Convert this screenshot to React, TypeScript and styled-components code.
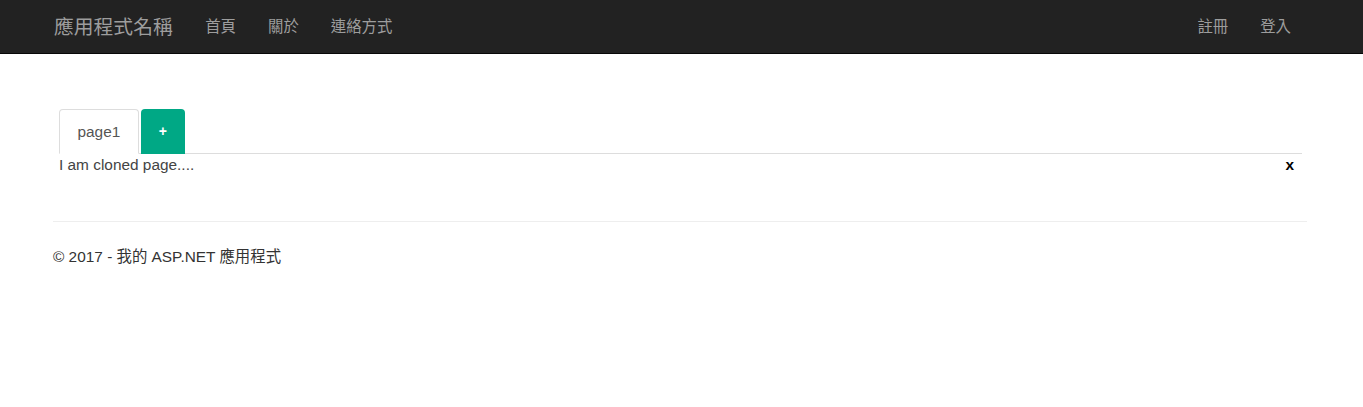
import React from 'react';
import styled, { createGlobalStyle } from 'styled-components';

const GlobalStyle = createGlobalStyle`
    body {
        margin: 0;
        background: #fff;
        color: #333;
        font-family: "Liberation Sans", Arial, "Noto Sans CJK TC", sans-serif;
        font-size: 15.4px;
        line-height: 22px;
    }
`

const Navbar = styled.nav`
    height: 54px;
    box-sizing: border-box;
    background: #222;
    border-bottom: 1px solid #080808;
`

const Container = styled.div`
    margin: 0 56px 0 53px;
`

const NavInner = styled(Container)`
    height: 53px;
    display: flex;
    align-items: center;
    justify-content: space-between;
`

const NavGroup = styled.div`
    display: flex;
    align-items: center;
`

const Brand = styled.a`
    color: #9d9d9d;
    font-size: 19.8px;
    padding: 0 16.5px 0 1px;
    text-decoration: none;
`

const NavLink = styled.a<{ $last?: boolean }>`
    color: #9d9d9d;
    font-size: 15.4px;
    padding: 0 ${p => (p.$last ? '16px' : '16px')};
    text-decoration: none;
`

const Main = styled(Container)`
    padding-top: 55px;
`

const TabPanel = styled.div`
    padding: 0 5px 0 6px;
`

const TabList = styled.div`
    display: flex;
    height: 44px;
    border-bottom: 1px solid #ddd;
`

const Tab = styled.div`
    height: 45px;
    box-sizing: border-box;
    padding: 0 17.5px;
    line-height: 43px;
    color: #555;
    background: #fff;
    border: 1px solid #ddd;
    border-bottom-color: transparent;
    border-radius: 4px 4px 0 0;
`

const AddTab = styled.div`
    width: 44px;
    height: 45px;
    margin-left: 2px;
    background: #00a885;
    color: #fff;
    font-weight: bold;
    font-size: 14px;
    line-height: 44px;
    text-align: center;
    border-radius: 4px 4px 0 0;
`

const TabContent = styled.div`
    display: flex;
    justify-content: space-between;
    color: #444;
`

const Close = styled.span`
    color: #000;
    font-weight: bold;
    padding-right: 8px;
`

const Rule = styled.hr`
    margin: 45px 0 0;
    border: 0;
    border-top: 1px solid #eee;
`

const Footer = styled.p`
    margin: 24px 0 0;
    color: #333;
`

function App() {
    return (
        <>
            <GlobalStyle />
            <Navbar>
                <NavInner>
                    <NavGroup>
                        <Brand>應用程式名稱</Brand>
                        <NavLink>首頁</NavLink>
                        <NavLink>關於</NavLink>
                        <NavLink>連絡方式</NavLink>
                    </NavGroup>
                    <NavGroup>
                        <NavLink>註冊</NavLink>
                        <NavLink $last>登入</NavLink>
                    </NavGroup>
                </NavInner>
            </Navbar>
            <Main>
                <TabPanel>
                    <TabList>
                        <Tab>page1</Tab>
                        <AddTab>+</AddTab>
                    </TabList>
                    <TabContent>
                        <span>I am cloned page....</span>
                        <Close>x</Close>
                    </TabContent>
                </TabPanel>
                <Rule />
                <Footer>© 2017 - 我的 ASP.NET 應用程式</Footer>
            </Main>
        </>
    )
}

export default App;
